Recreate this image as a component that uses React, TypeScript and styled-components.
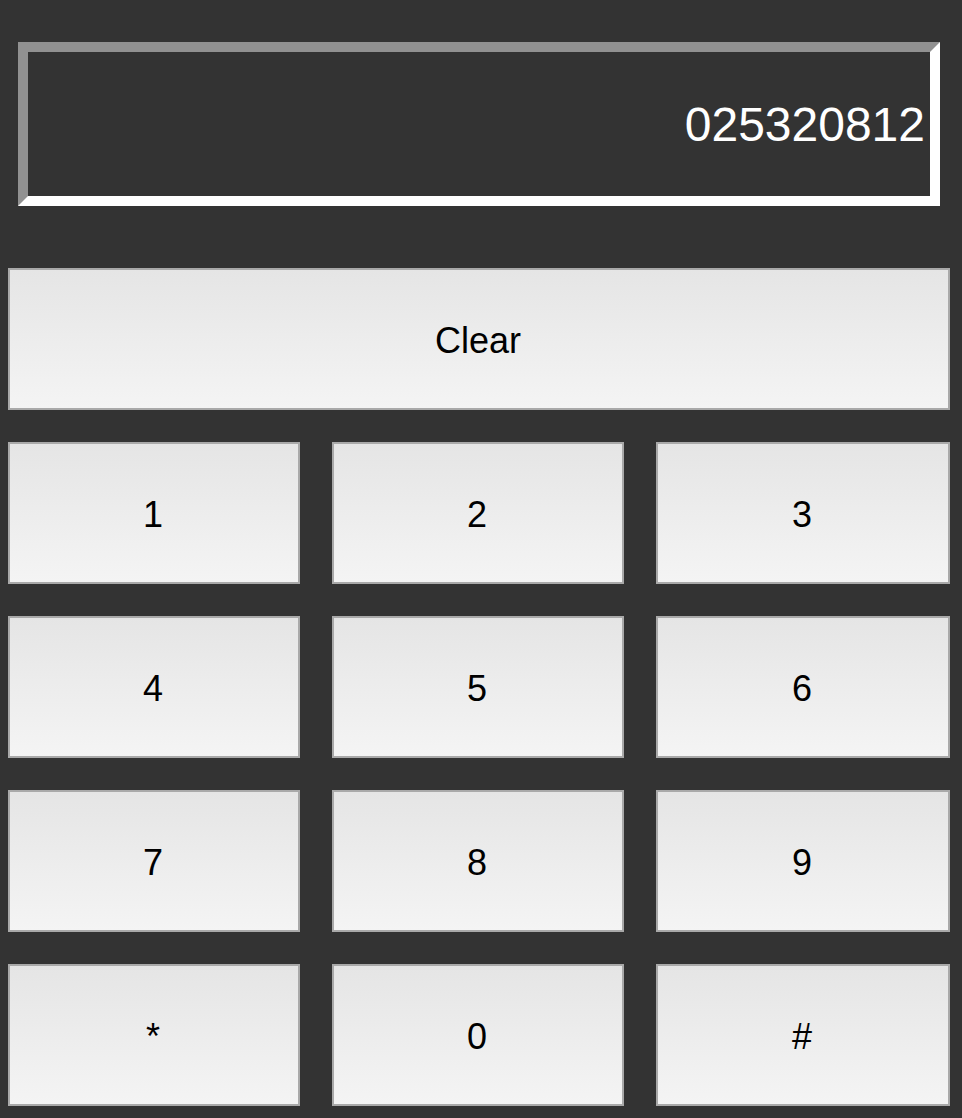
import styled, { createGlobalStyle } from 'styled-components';

const GlobalStyle = createGlobalStyle`
    body {
        margin: 8px;
        background: #333333;
        font-family: "Liberation Sans", Arial, sans-serif;
    }
`;

const Pad = styled.div`
    width: 942px;
    padding-top: 34px;
    display: flex;
    flex-direction: column;
`;

const Display = styled.div`
    box-sizing: border-box;
    height: 164px;
    margin: 0 10px 62px;
    border: 10px solid;
    border-color: #919191 #ffffff #ffffff #919191;
    background: #333333;
    color: #ffffff;
    font-size: 48px;
    display: flex;
    align-items: center;
    justify-content: flex-end;
    padding: 0 5px 0 0;
`;

const Keys = styled.div`
    display: grid;
    grid-template-columns: 292px 292px 294px;
    grid-auto-rows: 142px;
    column-gap: 32px;
    row-gap: 32px;
`;

const Key = styled.button<{ wide?: boolean }>`
    grid-column: ${(props) => (props.wide ? '1 / -1' : 'auto')};
    box-sizing: border-box;
    border: 2px solid #a9a9a9;
    border-radius: 0;
    background: linear-gradient(to bottom, #e5e5e5, #f4f4f4);
    color: #000000;
    font-family: "Liberation Sans", Arial, sans-serif;
    font-size: 36px;
    padding: 4px 2px 0 0;
    cursor: pointer;
`;

const keys = ['1', '2', '3', '4', '5', '6', '7', '8', '9', '*', '0', '#'];

const App = () => {
    return (
        <>
            <GlobalStyle />
            <Pad>
                <Display>025320812</Display>
                <Keys>
                    <Key wide>Clear</Key>
                    {keys.map((k) => (
                        <Key key={k}>{k}</Key>
                    ))}
                </Keys>
            </Pad>
        </>
    );
};

export default App;
